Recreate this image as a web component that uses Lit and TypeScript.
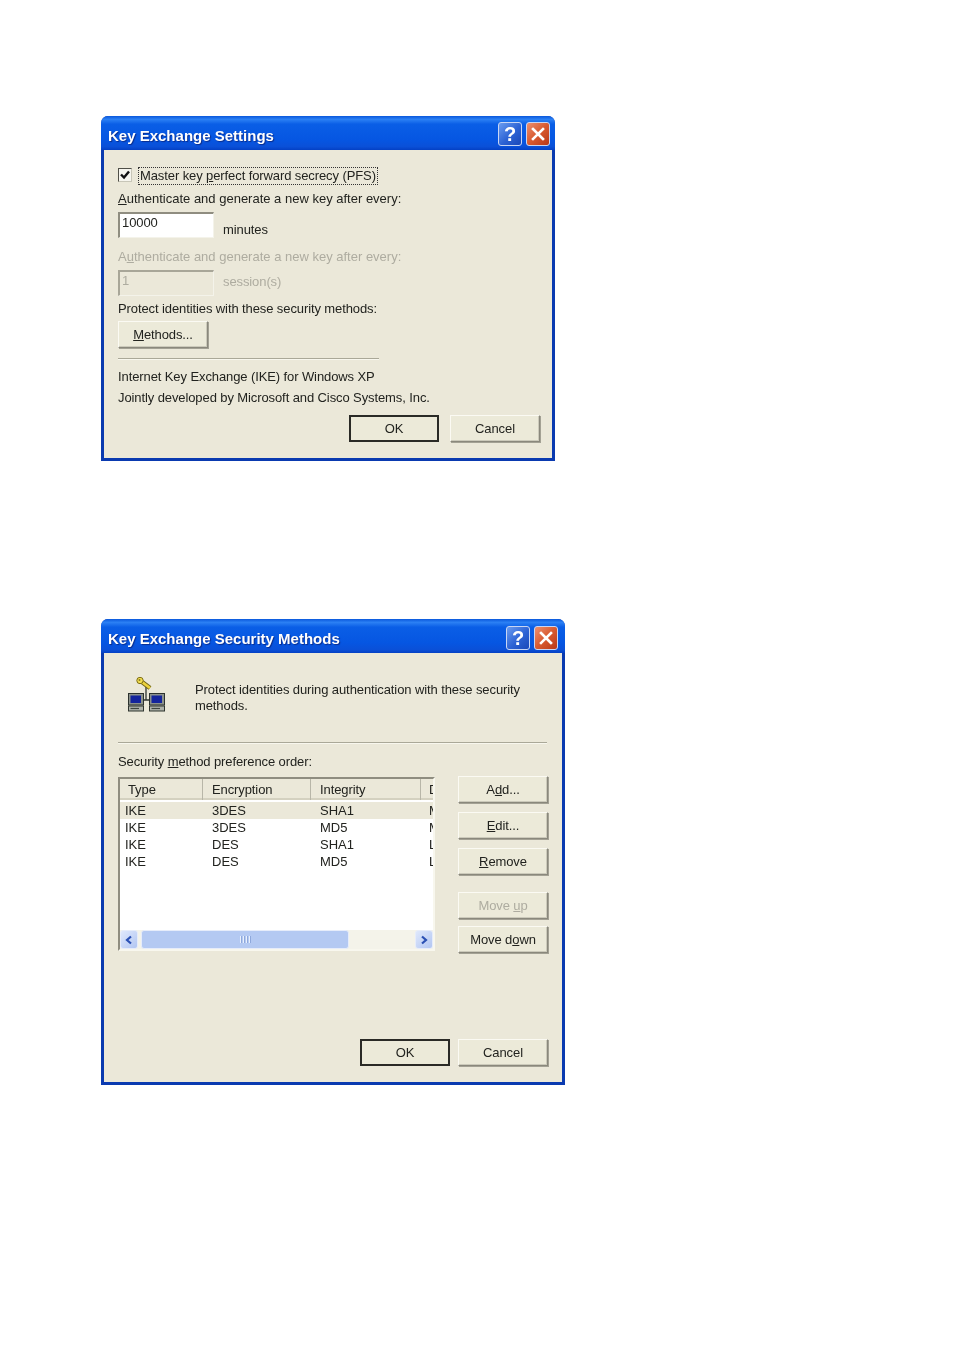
import { LitElement, html, css, svg } from "lit";
import { customElement } from "lit/decorators.js";

const rows = [
  ["IKE", "3DES", "SHA1", "MD5"],
  ["IKE", "3DES", "MD5", "MD5"],
  ["IKE", "DES", "SHA1", "Low"],
  ["IKE", "DES", "MD5", "Low"],
];

const keyIcon = svg`<svg class="net-icon" viewBox="0 0 40 36" width="40" height="36" aria-hidden="true">
  <path d="M19 9 V23 M15 23 H23" stroke="#2f3532" stroke-width="1.300" fill="none"/>
  <path d="M15 5 L23 11" stroke="#6e6214" stroke-width="4.600" fill="none"/>
  <path d="M15 5 L23 11" stroke="#ecd23c" stroke-width="2.800" fill="none"/>
  <circle cx="13" cy="3.500" r="3.200" fill="#f2de50" stroke="#7c6c18" stroke-width="1"/>
  <circle cx="12.500" cy="3" r="1" fill="#8a7a20"/>
  ${[1, 22].map(
    (x) => svg`<g transform="translate(${x} 16)">
      <rect x="0.500" y="0.500" width="15" height="11.500" fill="#8c928c" stroke="#2c322e"/>
      <rect x="2.500" y="2.500" width="10.500" height="7.500" fill="#14249c"/>
      <rect x="0.500" y="13" width="15" height="5" fill="#aeb2aa" stroke="#2f342f"/>
      <path d="M2.500 15.500 H11" stroke="#3f453f" stroke-width="1.200"/>
    </g>`
  )}
</svg>`;

@customElement("app-root")
export class AppRoot extends LitElement {
  static styles = css`
    :host {
      display: block;
      height: 1351px;
      background: #fff;
      box-sizing: border-box;
      padding: 116px 0 0 101px;
      font-family: "Liberation Sans", Arial, sans-serif;
      font-size: 13px;
      letter-spacing: -0.1px;
      color: #22231f;
      overflow: hidden;
    }
    .win {
      display: flex;
      flex-direction: column;
      box-sizing: border-box;
      background: #0a3ab0;
      border-radius: 7px 7px 0 0;
      filter: blur(0.3px);
    }
    .win.one { width: 454px; height: 345px; }
    .win.two { width: 464px; height: 466px; margin-top: 158px; }
    .title {
      height: 34px;
      flex: none;
      display: flex;
      align-items: center;
      padding: 0 5px 0 7px;
      gap: 4px;
      border-radius: 7px 7px 0 0;
      background: linear-gradient(180deg, #0a58dc 0%, #2b80f4 10%, #0a5ee6 24%, #0656e2 70%, #0a50d8 90%, #0440c4 100%);
    }
    .two .title { padding-right: 7px; }
    .two .cap { margin-top: 4px; }
    .title h1 {
      flex: 1;
      margin: 4px 0 0;
      font-size: 15px;
      font-weight: 700;
      letter-spacing: 0;
      color: #fff;
      text-shadow: 1px 1px 1px #0a2c8c;
    }
    .cap {
      width: 24px;
      height: 24px;
      box-sizing: border-box;
      border: 1px solid #c8d6f4;
      border-radius: 3px;
      display: flex;
      align-items: center;
      justify-content: center;
      margin-top: 2px;
    }
    .cap.help {
      background: linear-gradient(135deg, #6a9cf0 0%, #2c62d4 55%, #1a48b8 100%);
      color: #fff;
      font-size: 20px;
      font-weight: 700;
      letter-spacing: 0;
    }
    .cap.close { background: linear-gradient(135deg, #ec9070 0%, #d85a30 50%, #b83818 100%); }
    .body {
      flex: 1;
      display: flex;
      flex-direction: column;
      align-items: flex-start;
      margin: 0 3px 3px;
      padding-left: 14px;
      background: #ebe8d9;
      box-sizing: border-box;
    }
    .line { height: 18px; line-height: 18px; white-space: nowrap; }
    .wide { letter-spacing: 0; }
    .dis { color: #aeaca0; }
    .check-row { display: flex; align-items: center; margin-top: 17px; height: 18px; gap: 6px; }
    .box {
      width: 14px;
      height: 14px;
      margin-top: -2px;
      box-sizing: border-box;
      background: #f6f5ee;
      border: 1px solid #4f4f48;
      border-right-color: #c8c6b8;
      border-bottom-color: #c8c6b8;
      display: flex;
    }
    .focus { border: 1px dotted #333; padding: 0 1px; line-height: 16px; white-space: nowrap; }
    .field-row { display: flex; align-items: flex-start; margin-top: 4px; }
    .input {
      width: 96px;
      height: 26px;
      box-sizing: border-box;
      background: #fff;
      border: 1px solid #f4f3ea;
      border-top: 2px solid #8f8d80;
      border-left: 2px solid #8f8d80;
      padding-left: 2px;
      line-height: 18px;
    }
    .input.dis { background: #ebe8d9; border-top-color: #a8a698; border-left-color: #a8a698; }
    .unit { margin: 9px 0 0 9px; line-height: 18px; }
    .unit.dis { margin-top: 3px; }
    .btn {
      box-sizing: border-box;
      width: 90px;
      height: 27px;
      padding-bottom: 1px;
      display: flex;
      align-items: center;
      justify-content: center;
      background: #ecead9;
      border: 1px solid;
      border-color: #fbfaf3 #8a887c #8a887c #fbfaf3;
      box-shadow: 1px 1px 0 #a3a194, inset -1px -1px 0 #cccabb;
      white-space: nowrap;
    }
    .btn.def { border: 2px solid #2a2a26; box-shadow: none; }
    .btn.dis { color: #aeaca0; }
    .sep { height: 1px; background: #aaa898; box-shadow: 0 1px 0 #f8f7ee; }
    .foot { display: flex; justify-content: flex-end; align-self: stretch; }
    .one .foot { margin-top: 8px; gap: 11px; padding-right: 12px; }
    .two .foot { margin-top: 86px; gap: 8px; padding-right: 14px; }

    .head { display: flex; align-items: flex-start; margin-top: 24px; height: 65px; }
    .net-icon { display: block; margin-left: 9px; flex: none; }
    .intro { margin: 5px 0 0 28px; width: 345px; line-height: 16px; }
    .list-zone { display: flex; align-self: stretch; margin-top: 6px; }
    .list {
      width: 317px;
      height: 174px;
      box-sizing: border-box;
      background: #fff;
      border: 2px solid #8f8d80;
      border-right-color: #f8f7ee;
      border-bottom-color: #f8f7ee;
      display: flex;
      flex-direction: column;
      overflow: hidden;
    }
    .thead {
      display: grid;
      grid-template-columns: 83px 108px 110px 14px;
      height: 21px;
      flex: none;
      background: #ebe8d9;
      box-shadow: inset 0 -2px 0 #d4d1c0;
      line-height: 21px;
      overflow: hidden;
    }
    .thead div { padding-left: 8px; border-right: 1px solid #b8b6a8; white-space: nowrap; overflow: hidden; }
    .thead div:nth-child(2), .thead div:nth-child(3) { padding-left: 9px; }
    .thead div:last-child { border-right: 0; }
    .tbody { flex: 1; padding-top: 2px; }
    .tr {
      display: grid;
      grid-template-columns: 83px 108px 110px 14px;
      height: 17px;
      line-height: 17px;
      letter-spacing: 0;
    }
    .tr.sel { background: #ebe8d9; }
    .tr div { padding-left: 5px; overflow: hidden; white-space: nowrap; }
    .tr div:nth-child(2), .tr div:nth-child(3) { padding-left: 9px; }
    .tr div:nth-child(4) { padding-left: 8px; }
    .scroll {
      height: 19px;
      flex: none;
      display: flex;
      align-items: stretch;
      background: #f4f3ea;
    }
    .arrow {
      width: 18px;
      flex: none;
      box-sizing: border-box;
      border: 1px solid #e6ecfa;
      border-radius: 3px;
      background: linear-gradient(135deg, #dfe8fc, #b2c6f2);
      display: flex;
      align-items: center;
      justify-content: center;
    }
    .thumb {
      width: 208px;
      margin-left: 3px;
      box-sizing: border-box;
      border: 1px solid #e6ecfa;
      border-radius: 3px;
      background: #b4c9f2;
      display: flex;
      align-items: center;
      justify-content: center;
      gap: 1px;
    }
    .thumb i { width: 1px; height: 7px; background: #e8effc; box-shadow: 1px 0 0 #8ea8dc; margin-right: 1px; }
    .spacer { flex: 1; }
    .side { display: flex; flex-direction: column; margin: -1px 0 0 23px; }
    .gap-9 { margin-top: 9px; }
    .gap-17 { margin-top: 17px; }
    .gap-7 { margin-top: 7px; }
  `;

  private cap() {
    return html`
      <div class="cap help">?</div>
      <div class="cap close">
        <svg width="14" height="14" viewBox="0 0 14 14" aria-hidden="true">
          <path d="M2 2 L12 12 M12 2 L2 12" stroke="#fff" stroke-width="2.600" stroke-linecap="square"/>
        </svg>
      </div>
    `;
  }

  private settings() {
    return html`
      <section class="win one">
        <header class="title"><h1>Key Exchange Settings</h1>${this.cap()}</header>
        <div class="body">
          <div class="check-row">
            <span class="box">
              <svg width="12" height="12" viewBox="0 0 12 12" aria-hidden="true">
                <path d="M2 5.500 L5 8.500 L10 2.500" stroke="#111" stroke-width="2.400" fill="none"/>
              </svg>
            </span>
            <span class="focus">Master key <u>p</u>erfect forward secrecy (PFS)</span>
          </div>
          <div class="line wide" style="margin-top:5px"><u>A</u>uthenticate and generate a new key after every:</div>
          <div class="field-row">
            <div class="input">10000</div>
            <div class="unit">minutes</div>
          </div>
          <div class="line wide dis" style="margin-top:9px">A<u>u</u>thenticate and generate a new key after every:</div>
          <div class="field-row">
            <div class="input dis">1</div>
            <div class="unit dis">session(s)</div>
          </div>
          <div class="line" style="margin-top:4px">Protect identities with these security methods:</div>
          <div class="btn" style="margin-top:3px"><span><u>M</u>ethods...</span></div>
          <div class="sep" style="width:261px;margin-top:10px"></div>
          <div class="line" style="margin-top:9px">Internet Key Exchange (IKE) for Windows XP</div>
          <div class="line" style="margin-top:3px">Jointly developed by Microsoft and Cisco Systems, Inc.</div>
          <div class="foot">
            <div class="btn def">OK</div>
            <div class="btn">Cancel</div>
          </div>
        </div>
      </section>
    `;
  }

  private methods() {
    return html`
      <section class="win two">
        <header class="title"><h1>Key Exchange Security Methods</h1>${this.cap()}</header>
        <div class="body">
          <div class="head">
            ${keyIcon}
            <div class="intro">Protect identities during authentication with these security methods.</div>
          </div>
          <div class="sep" style="width:429px"></div>
          <div class="line" style="margin-top:10px">Security <u>m</u>ethod preference order:</div>
          <div class="list-zone">
            <div class="list">
              <div class="thead">
                <div>Type</div><div>Encryption</div><div>Integrity</div><div>Diffie</div>
              </div>
              <div class="tbody">
                ${rows.map(
                  (r, i) => html`<div class="tr ${i === 0 ? "sel" : ""}">${r.map((c) => html`<div>${c}</div>`)}</div>`
                )}
              </div>
              <div class="scroll">
                <div class="arrow">
                  <svg width="10" height="10" viewBox="0 0 10 10" aria-hidden="true"><path d="M7 1.500 L3 5 L7 8.500" stroke="#2a50b4" stroke-width="2.200" fill="none"/></svg>
                </div>
                <div class="thumb"><i></i><i></i><i></i><i></i></div>
                <div class="spacer"></div>
                <div class="arrow">
                  <svg width="10" height="10" viewBox="0 0 10 10" aria-hidden="true"><path d="M3 1.500 L7 5 L3 8.500" stroke="#2a50b4" stroke-width="2.200" fill="none"/></svg>
                </div>
              </div>
            </div>
            <div class="side">
              <div class="btn"><span>A<u>d</u>d...</span></div>
              <div class="btn gap-9"><span><u>E</u>dit...</span></div>
              <div class="btn gap-9"><span><u>R</u>emove</span></div>
              <div class="btn dis gap-17"><span>Move <u>u</u>p</span></div>
              <div class="btn gap-7"><span>Move d<u>o</u>wn</span></div>
            </div>
          </div>
          <div class="foot">
            <div class="btn def">OK</div>
            <div class="btn">Cancel</div>
          </div>
        </div>
      </section>
    `;
  }

  render() {
    return html`${this.settings()}${this.methods()}`;
  }
}
